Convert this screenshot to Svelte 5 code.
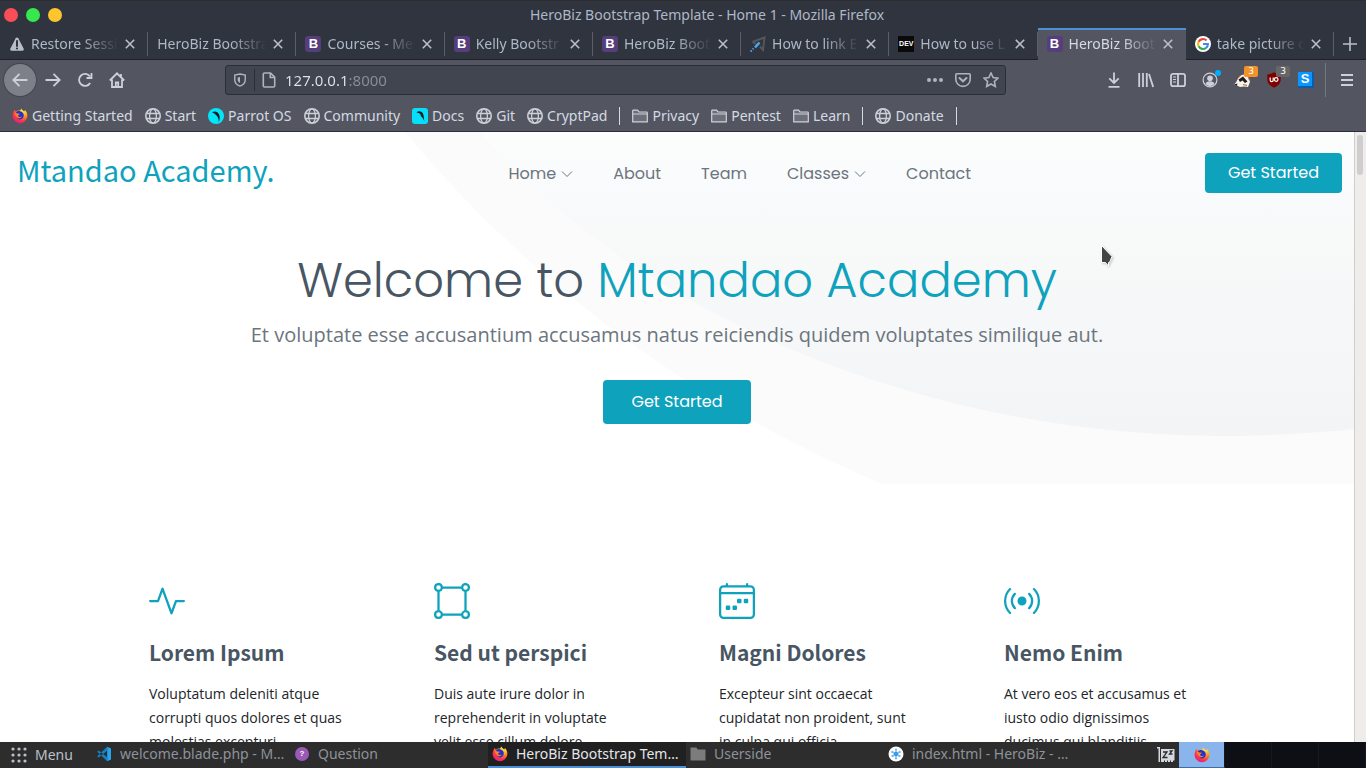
<script>
  const tabs = [
    { icon: 'warn', label: 'Restore Sessi' },
    { icon: '', label: 'HeroBiz Bootstra' },
    { icon: 'b', label: 'Courses - Me' },
    { icon: 'b', label: 'Kelly Bootstr' },
    { icon: 'b', label: 'HeroBiz Boot' },
    { icon: 'plane', label: 'How to link E' },
    { icon: 'dev', label: 'How to use L' },
    { icon: 'b', label: 'HeroBiz Boot', active: true },
    { icon: 'google', label: 'take picture o' }
  ];
  const bookmarks = [
    { icon: 'firefox', label: 'Getting Started' },
    { icon: 'globe', label: 'Start' },
    { icon: 'parrot', label: 'Parrot OS' },
    { icon: 'globe', label: 'Community' },
    { icon: 'docs', label: 'Docs' },
    { icon: 'globe', label: 'Git' },
    { icon: 'globe', label: 'CryptPad' },
    { sep: true },
    { icon: 'folder', label: 'Privacy' },
    { icon: 'folder', label: 'Pentest' },
    { icon: 'folder', label: 'Learn' },
    { sep: true },
    { icon: 'globe', label: 'Donate' },
    { sep: true }
  ];
  const links = [
    { label: 'Home', menu: true },
    { label: 'About' },
    { label: 'Team' },
    { label: 'Classes', menu: true },
    { label: 'Contact' }
  ];
  const features = [
    {
      title: 'Lorem Ipsum',
      text: 'Voluptatum deleniti atque corrupti quos dolores et quas molestias excepturi',
      paths: ['M6 2a.5.5 0 0 1 .47.33L10 12.036l1.53-4.208A.5.5 0 0 1 12 7.5h3.5a.5.5 0 0 1 0 1h-3.15l-1.88 5.17a.5.5 0 0 1-.94 0L6 3.964 4.47 8.171A.5.5 0 0 1 4 8.5H.5a.5.5 0 0 1 0-1h3.15l1.88-5.17A.5.5 0 0 1 6 2Z']
    },
    {
      title: 'Sed ut perspici',
      text: 'Duis aute irure dolor in reprehenderit in voluptate velit esse cillum dolore',
      paths: ['M2 1a1 1 0 1 0 0 2 1 1 0 0 0 0-2zM0 2a2 2 0 0 1 3.937-.5h8.126A2 2 0 1 1 14.5 3.937v8.126a2 2 0 1 1-2.437 2.437H3.937A2 2 0 1 1 1.5 12.063V3.937A2 2 0 0 1 0 2zm2.5 1.937v8.126c.703.18 1.256.734 1.437 1.437h8.126a2.004 2.004 0 0 1 1.437-1.437V3.937A2.004 2.004 0 0 1 12.063 2.5H3.937A2.004 2.004 0 0 1 2.5 3.937zM14 1a1 1 0 1 0 0 2 1 1 0 0 0 0-2zM2 13a1 1 0 1 0 0 2 1 1 0 0 0 0-2zm12 0a1 1 0 1 0 0 2 1 1 0 0 0 0-2z']
    },
    {
      title: 'Magni Dolores',
      text: 'Excepteur sint occaecat cupidatat non proident, sunt in culpa qui officia',
      paths: [
        'M3.5 0a.5.5 0 0 1 .5.5V1h8V.5a.5.5 0 0 1 1 0V1h1a2 2 0 0 1 2 2v11a2 2 0 0 1-2 2H2a2 2 0 0 1-2-2V3a2 2 0 0 1 2-2h1V.5a.5.5 0 0 1 .5-.5zM2 2a1 1 0 0 0-1 1v1h14V3a1 1 0 0 0-1-1H2zm13 3H1v9a1 1 0 0 0 1 1h12a1 1 0 0 0 1-1V5z',
        'M11 7.5a.5.5 0 0 1 .5-.5h1a.5.5 0 0 1 .5.5v1a.5.5 0 0 1-.5.5h-1a.5.5 0 0 1-.5-.5v-1zm-3 0a.5.5 0 0 1 .5-.5h1a.5.5 0 0 1 .5.5v1a.5.5 0 0 1-.5.5h-1a.5.5 0 0 1-.5-.5v-1zm-2 3a.5.5 0 0 1 .5-.5h1a.5.5 0 0 1 .5.5v1a.5.5 0 0 1-.5.5h-1a.5.5 0 0 1-.5-.5v-1zm-3 0a.5.5 0 0 1 .5-.5h1a.5.5 0 0 1 .5.5v1a.5.5 0 0 1-.5.5h-1a.5.5 0 0 1-.5-.5v-1z'
      ]
    },
    {
      title: 'Nemo Enim',
      text: 'At vero eos et accusamus et iusto odio dignissimos ducimus qui blanditiis',
      paths: ['M3.05 3.05a7 7 0 0 0 0 9.9.5.5 0 0 1-.707.707 8 8 0 0 1 0-11.314.5.5 0 0 1 .707.707zm2.122 2.122a4 4 0 0 0 0 5.656.5.5 0 1 1-.708.708 5 5 0 0 1 0-7.072.5.5 0 0 1 .708.708zm5.656-.708a.5.5 0 0 1 .708 0 5 5 0 0 1 0 7.072.5.5 0 1 1-.708-.708 4 4 0 0 0 0-5.656.5.5 0 0 1 0-.708zm2.122-2.12a.5.5 0 0 1 .707 0 8 8 0 0 1 0 11.313.5.5 0 0 1-.707-.707 7 7 0 0 0 0-9.9.5.5 0 0 1 0-.707zM10 8a2 2 0 1 1-4 0 2 2 0 0 1 4 0z']
    }
  ];
  const tasks = [
    { icon: 'code', label: 'welcome.blade.php - M…' },
    { icon: 'question', label: 'Question' },
    { icon: 'firefox', label: 'HeroBiz Bootstrap Tem…', active: true },
    { icon: 'dir', label: 'Userside' },
    { icon: 'atom', label: 'index.html - HeroBiz - …' }
  ];
  let address = $state('127.0.0.1:8000');
</script>

{#snippet icon(name)}
  {#if name === 'b'}
    <span class="fav-b">B</span>
  {:else if name === 'dev'}
    <span class="fav-dev">DEV</span>
  {:else if name === 'question'}
    <span class="fav-q">?</span>
  {:else if name}
    <svg class="ico" viewBox="0 0 16 16" width="16" height="16" aria-hidden="true">
      {#if name === 'warn'}
        <path d="M8 1.500c.6 0 1 .3 1.300.8l5.300 10.300c.6 1.200 0 2.200-1.200 2.200H2.600c-1.200 0-1.800-1-1.200-2.200L6.700 2.300C7 1.800 7.400 1.500 8 1.500z" fill="#b6bec9" />
        <path d="M8 5v5" stroke="#2f343f" stroke-width="2" stroke-linecap="round" /><circle cx="8" cy="12.500" r="1.100" fill="#2f343f" />
      {:else if name === 'plane'}
        <path d="M2.500 6 14.500 1.500 13 14 10 10.500M2.500 6 6 8" fill="none" stroke="#54565a" stroke-width="2" />
        <path d="m9.500 6.500-4.500 5" stroke="#4aa8f0" stroke-width="2.600" /><path d="m3.500 12.500-.8.8" stroke="#4aa8f0" stroke-width="2" /><circle cx="1.200" cy="15" r="1" fill="#4aa8f0" />
      {:else if name === 'google'}
        <circle cx="8" cy="8" r="8" fill="#fff" />
        <g fill="none" stroke-width="2.100">
          <path d="M11.500 4.500A5 5 0 0 0 3.600 5.700" stroke="#ea4335" />
          <path d="M3.600 5.700a5 5 0 0 0 0 4.600" stroke="#fbbc05" />
          <path d="M3.600 10.300a5 5 0 0 0 7.500 1.600" stroke="#34a853" />
          <path d="M8 8h4.900a5 5 0 0 1-1.800 3.900" stroke="#4285f4" />
        </g>
      {:else if name === 'globe'}
        <g fill="none" stroke="#cdd0d8" stroke-width="1.300"><circle cx="8" cy="8" r="7.200" stroke-width="1.600" /><ellipse cx="8" cy="8" rx="3.400" ry="7.200" /><path d="M1.500 5.500h13M1.500 10.500h13" /></g>
      {:else if name === 'folder'}
        <path d="M.7 13.800V3q0-.8.8-.8h4l1.500 1.800h7.500q.8 0 .8.800v9z" fill="#6c6f79" stroke="#cfd2d8" stroke-width="1.200" /><path d="M1 6h14" stroke="#cfd2d8" />
      {:else if name === 'parrot'}
        <circle cx="8" cy="8" r="8" fill="#05e5fa" /><path d="M4 4.500c2.500-2 5.500-1 6.800 1.500 1.200 2.300 1.200 4.700 0 8 0-3-.7-5-2.300-6.500L7 6C6 5.300 5 4.800 4 4.500z" fill="#101820" />
      {:else if name === 'docs'}
        <rect width="16" height="16" rx="3" fill="#05dffa" /><path d="M4.500 4.500c2-2 5-1.500 6.300.8 1 2 1 4.500 1.500 8-1-3-2-4-3.500-5.300L8.500 6C7 5.500 6 4.500 4.500 4.500z" fill="#101820" />
      {:else if name === 'firefox'}
        <defs>
          <radialGradient id="ff-fire" cx=".75" cy=".12" r="1"><stop offset="0" stop-color="#fff44f" /><stop offset=".4" stop-color="#ff9a1c" /><stop offset=".72" stop-color="#ff3647" /><stop offset="1" stop-color="#e31587" /></radialGradient>
        </defs>
        <path d="M1.300 4.200 2.600 1.800l1 1.800C5.300 2.500 6.600 2.400 8 2.600L9.300.4c.8 1.700 2 2.200 3 3.100l.7-1.500c1.800 1.800 2.600 4 2.300 6.700A7.400 7.400 0 0 1 .6 8.700c-.1-1.700.1-3.100.7-4.500z" fill="url(#ff-fire)" />
        <path d="M4 4.200c1.500-1.400 3.300-1.200 4-.9l1.900.8c1.900 1.400 2.200 3.200 1.600 4.900-.8 2-2.800 2.900-4.700 2.200C5 10.500 4.300 9 4.700 7.700z" fill="#2531cf" />
        <path d="M2.600 5.300C4 4.600 5 5 5.600 5.600l2.200.2c0 1-1.700 1.300-1.800 2 .4 1.300 2.300 1.700 3.800.8-.8 2.100-4.600 2.400-5.700-.7z" fill="#ff831f" />
      {:else if name === 'code'}
        <path d="M11.200.8 15 2.500v11l-3.800 1.700z" fill="#26a6ef" />
        <path d="m11.200.8.3 3.700-8.800 7.100-1.500-1.400zM11.200 15.200l.3-3.700-8.800-7.100-1.500 1.400z" fill="#1480c8" />
      {:else if name === 'dir'}
        <path d="M.5 14.500v-13h5.800l1.500 2h7.700v11z" fill="#7c7c7c" />
      {:else if name === 'atom'}
        <circle cx="8" cy="8" r="7.500" fill="#fff" /><path d="M8 3v10M3.800 5.500l8.400 5M12.200 5.500l-8.400 5" stroke="#8cc4f0" stroke-width="1.500" /><path d="m8 5.500 2.200 1.200v2.600L8 10.500 5.800 9.300V6.700z" fill="#3b9be8" /><g fill="#6cb4ee"><circle cx="8" cy="3.500" r="1" /><circle cx="4.200" cy="6" r="1" /><circle cx="11.800" cy="6" r="1" /><circle cx="4.500" cy="10" r="1" /><circle cx="11.500" cy="10" r="1" /><circle cx="8" cy="12.500" r="1" /></g>
      {/if}
    </svg>
  {/if}
{/snippet}

<div class="desktop">
  <header class="chrome">
    <div class="titlebar">
      <div class="lights"><button class="red" aria-label="Close window"></button><button class="green" aria-label="Maximise"></button><button class="yellow" aria-label="Minimise"></button></div>
      <span>HeroBiz Bootstrap Template - Home 1 - Mozilla Firefox</span>
    </div>
    <div class="tabs">
      {#each tabs as t}
        <div class="tab" class:active={t.active}>
          {@render icon(t.icon)}
          <span class="tab-label">{t.label}</span>
          <button class="close" aria-label="Close tab"><svg viewBox="0 0 10 10" width="10" height="10"><path d="m.8.8 8.400 8.400M9.200.8.8 9.200" stroke="currentColor" stroke-width="1.600" /></svg></button>
        </div>
      {/each}
      <button class="newtab" aria-label="New tab"><svg viewBox="0 0 14 14" width="14" height="14"><path d="M7 0v14M0 7h14" stroke="currentColor" stroke-width="1.600" /></svg></button>
    </div>
    <div class="toolbar">
      <button class="tool back" aria-label="Back"><svg viewBox="0 0 16 16" width="16" height="16"><path d="M15.500 8H1.500M7.500 1.800 1.300 8l6.200 6.200" /></svg></button>
      <button class="tool" aria-label="Forward"><svg viewBox="0 0 16 16" width="16" height="16"><path d="M.5 8h14M8.500 1.800 14.700 8l-6.200 6.200" /></svg></button>
      <button class="tool" aria-label="Reload"><svg viewBox="0 0 16 16" width="16" height="16"><path d="M13.200 11A6 6 0 1 1 13 4.500M14.500 1v5H9.500" /></svg></button>
      <button class="tool" aria-label="Home"><svg viewBox="0 0 16 16" width="16" height="16"><path d="M.8 8.500 8 1.300l7.200 7.200M3 7.500V15h10V7.500M6.800 15v-4.500h2.400V15M12 2v3" /></svg></button>
      <div class="urlbar">
        <svg class="line" viewBox="0 0 16 16" width="14" height="14"><path d="M8 1.200 14 2.500v5.200c0 3.500-2.500 6-6 7.300-3.500-1.300-6-3.800-6-7.300V2.500z" /><path d="M8 4.500v7c-1.800-.9-2.700-2.300-2.700-4V5z" fill="currentColor" stroke="none" /></svg>
        <span class="url-sep"></span>
        <svg class="line" viewBox="0 0 16 16" width="16" height="16"><path d="M3.500 1h6l4.200 4.200v8.600q0 1.200-1.200 1.200h-9q-1.200 0-1.200-1.200V2.200Q2.300 1 3.500 1zM9.300 1v4.500h4.400" /></svg>
        <input type="text" aria-label="Address" bind:value={address} />
        <svg viewBox="0 0 16 16" width="16" height="16" fill="currentColor"><circle cx="2" cy="8" r="2" /><circle cx="8" cy="8" r="2" /><circle cx="14" cy="8" r="2" /></svg>
        <svg class="line" viewBox="0 0 16 16" width="16" height="16"><path d="M1.800 1.800h12.400q1 0 1 1v4.400a7.200 7.200 0 0 1-14.400 0V2.800q0-1 1-1z" /><path d="m4.500 6 3.500 3.300L11.500 6" stroke-width="2" stroke-linecap="round" /></svg>
        <svg class="line" viewBox="0 0 16 16" width="16" height="16"><path d="m8 1 2.100 4.500 4.900.6-3.600 3.400.9 4.900L8 12l-4.300 2.400.9-4.900L1 6.100l4.900-.6z" /></svg>
      </div>
      <button class="tool" aria-label="Downloads"><svg viewBox="0 0 16 16" width="16" height="16"><path d="M8 .5v10M3.300 6.300 8 11l4.700-4.700M2.500 14.800h11" /></svg></button>
      <button class="tool" aria-label="Library"><svg viewBox="0 0 16 16" width="16" height="16"><path d="M1.200 1v14M5 1v14M8.800 1v14M11 2l4.200 13" /></svg></button>
      <button class="tool" aria-label="Sidebar"><svg viewBox="0 0 16 16" width="16" height="16"><rect x="1" y="1.800" width="14" height="12.400" rx="2" /><path d="M8 2v12" /><path d="M3 5h3M3 7.500h3M3 10h3" stroke-width="1" /></svg></button>
      <button class="tool" aria-label="Account">
        <svg viewBox="0 0 16 16" width="16" height="16"><circle cx="8" cy="8" r="6.900" stroke-width="1.200" /><circle cx="8" cy="6.300" r="2.800" fill="currentColor" stroke="none" /><path d="M3.300 12c1-2 2.500-2.700 4.700-2.700s3.700.7 4.700 2.700a6.200 6.200 0 0 1-9.400 0z" fill="currentColor" stroke="none" /></svg>
        <i class="dot"></i>
      </button>
      <button class="tool" aria-label="Privacy Badger">
        <svg viewBox="0 0 16 16" width="16" height="16" stroke="none"><path d="M0 12.500C2 11 3 8.500 4 6.500 5.500 4 8 2.500 10.500 2.500l4 2.500 1.500 5-2 5-4-.5-4 .5-3-1.500z" fill="#f7f2ea" /><path d="M0 12.500 3.500 11.500 2.900 13.800zM4.500 7.500 9 4.500l4.500 5-2.500 1.500L8.500 8.500 6 10z" fill="#221d1d" /><path d="m10.500 3 4 2 .8 3M4 6l2-2.200M9 12.500l4 1" fill="none" stroke="#ba6a35" stroke-width="1.100" /></svg>
        <b class="badge orange">3</b>
      </button>
      <button class="tool" aria-label="uBlock Origin">
        <svg viewBox="0 0 16 16" width="16" height="16" stroke="none"><path d="M8 .3c2 1.300 4 1.900 6.700 2.100v5c0 4-3 6.500-6.700 8.300C4.300 13.900 1.300 11.400 1.300 7.400v-5C4 2.200 6 1.600 8 .3z" fill="#800000" /><path d="M4.200 5.500v2.800q0 1.300 1.500 1.300t1.500-1.300V5.500" fill="none" stroke="#fff" stroke-width="1.200" /><circle cx="10.200" cy="7.500" r="1.800" fill="none" stroke="#fff" stroke-width="1.200" /></svg>
        <b class="badge gray">3</b>
      </button>
      <button class="tool" aria-label="Stylus"><span class="fav-s">S</span></button>
      <span class="bar-sep"></span>
      <button class="tool" aria-label="Open menu"><svg viewBox="0 0 16 16" width="16" height="16"><path d="M2 3h12M2 8h12M2 13h12" /></svg></button>
    </div>
    <nav class="bookmarks" aria-label="Bookmarks">
      {#each bookmarks as b}
        {#if b.sep}<i class="bm-sep"></i>{:else}<a href="#top">{@render icon(b.icon)}{b.label}</a>{/if}
      {/each}
    </nav>
  </header>

  <div class="viewport">
    <main class="site" id="top">
      <svg class="swoosh" viewBox="0 0 1354 352" preserveAspectRatio="none" aria-hidden="true">
        <defs>
          <linearGradient id="wash" x1="0" y1="0" x2="0" y2="1"><stop offset="0" stop-color="#fcfdfd" /><stop offset=".2" stop-color="#f9fafb" /><stop offset=".35" stop-color="#f8f9f9" /><stop offset=".65" stop-color="#f5f7f8" /><stop offset="1" stop-color="#f3f4f6" /></linearGradient>
        </defs>
        <path d="M405 0C525 145 690 272 882 352H1354V0z" fill="#fbfbfb" />
        <path d="M480 0C640 186 930 304 1223 304 1270 304 1315 301 1354 297V0z" fill="url(#wash)" />
      </svg>
      <div class="site-head">
        <a class="logo" href="#top">Mtandao Academy.</a>
        <nav class="menu" aria-label="Main">
          {#each links as l}
            <a href="#top">{l.label}{#if l.menu}<svg viewBox="0 0 12 12" width="12" height="12"><path d="m1 3.500 5 5 5-5" fill="none" stroke="currentColor" /></svg>{/if}</a>
          {/each}
        </nav>
        <a class="btn" href="#features">Get Started</a>
      </div>
      <section class="hero">
        <h1>Welcome to <span>Mtandao Academy</span></h1>
        <p>Et voluptate esse accusantium accusamus natus reiciendis quidem voluptates similique aut.</p>
        <a class="btn big" href="#features">Get Started</a>
      </section>
      <section class="features" id="features">
        {#each features as f}
          <article>
            <svg viewBox="0 0 16 16" width="36" height="36" fill="currentColor" aria-hidden="true">{#each f.paths as d}<path {d} />{/each}</svg>
            <h2>{f.title}</h2>
            <p>{f.text}</p>
          </article>
        {/each}
      </section>
      <svg class="pointer" viewBox="0 0 14 24" width="14" height="24" aria-hidden="true"><path d="M1.500 1.500v17h4L8.500 22v-3.500h1l2.500-6z" fill="#444" stroke="#fff" /></svg>
    </main>
    <div class="scrollbar"><i></i></div>
  </div>

  <footer class="taskbar">
    <button class="start"><svg viewBox="0 0 16 16" width="16" height="16" fill="#b9c0c9">{#each [2, 8, 14] as x}{#each [2, 8, 14] as y}<circle cx={x} cy={y} r="1.600" />{/each}{/each}</svg>Menu</button>
    <div class="tasks">
      {#each tasks as t}
        <button class:active={t.active}>{@render icon(t.icon)}<span>{t.label}</span></button>
      {/each}
    </div>
    <svg class="tray" viewBox="0 0 18 18" width="18" height="18" aria-label="Memory"><path d="M0 1h3v15H1.500V2.500H0zM4 3h13.500v11.500H16V16h-2v-1.500h-1V16h-2v-1.500h-1V16H8v-1.500H7V16H4z" fill="#d5d9df" /><path d="M6 6h4l-4 5.500h4.500M12.500 5H15l-2.500 3h3" fill="none" stroke="#2b2b2b" stroke-width="1.300" /></svg>
    <div class="spaces"><button class="on" aria-label="Workspace 1">{@render icon('firefox')}</button><button aria-label="Workspace 2"></button><button aria-label="Workspace 3"></button><button aria-label="Workspace 4"></button></div>
  </footer>
</div>

<style>
  :global(body) { margin: 0; }
  .desktop { display: flex; flex-direction: column; height: 100vh; overflow: hidden; font: 15px/20px "Noto Sans", sans-serif; }
  button { border: 0; padding: 0; background: none; color: inherit; font: inherit; display: flex; align-items: center; justify-content: center; }
  a { color: inherit; text-decoration: none; }
  svg { display: block; flex: none; }

  .chrome { flex: none; background: #535661; color: #d3dae3; font-size: 14px; border-bottom: 1px solid #2b2e39; }
  .titlebar { display: grid; grid-template-columns: auto 1fr; align-items: center; height: 28px; padding: 0 4px; background: #2f343f; color: #afb8c5; box-sizing: border-box; border-top: 1px solid #2d2d2d; }
  .titlebar span { text-align: center; padding-right: 10px; }
  .lights { display: flex; gap: 8px; }
  .lights button { width: 14px; height: 14px; border-radius: 50%; }
  .red { background: #f94e58; } .green { background: #37e84c; } .yellow { background: #fdc62f; }
  .tabs { display: flex; height: 32px; background: #2f343f; color: #afb8c5; }
  .tab { flex: 1 1 0; min-width: 0; display: flex; align-items: center; gap: 6px; padding: 0 13px 0 9px; border-bottom: 1px solid #1f222c; box-sizing: border-box; background: linear-gradient(#5a5e67, #5a5e67) right 4px / 1px 24px no-repeat; }
  .tab.active { background: #535661; border-top: 2px solid #4a90d9; border-bottom-color: #535661; color: #d3dae3; padding-bottom: 1px; }
  .tab-label { flex: 1; min-width: 0; overflow: hidden; white-space: nowrap; mask-image: linear-gradient(to left, transparent, #000 36px); }
  .close { color: #b9c0ca; width: 10px; }
  .newtab { width: 32px; color: #b9c0ca; border-bottom: 1px solid #1f222c; }
  .fav-b { flex: none; width: 16px; height: 16px; border-radius: 3px; background: #563d7c; color: #fff; font: bold 13px/16px "Liberation Sans", sans-serif; text-align: center; }
  .fav-dev { flex: none; width: 16px; height: 16px; background: #0a0a0a; color: #fff; font: bold 7px/16px "Liberation Sans", sans-serif; text-align: center; }
  .fav-q { flex: none; width: 14px; height: 14px; margin: 0 1px; border-radius: 50%; background: #9b59b6; color: #fff; font: bold 8px/14px "Liberation Sans", sans-serif; text-align: center; }
  .fav-s { width: 14px; height: 14px; background: #0b95ff; color: #fff; font: bold 13px/14px "Liberation Sans", sans-serif; text-align: center; border-right: 2px solid #0a5da8; border-bottom: 2px solid #0a5da8; }

  .toolbar { display: flex; align-items: center; height: 40px; padding: 0 3px 0 4px; color: #cdd0d8; }
  .tool { position: relative; flex: none; width: 32px; height: 32px; }
  .tool > svg { fill: none; stroke: currentColor; stroke-width: 1.8; }
  .tool > svg[stroke="none"] { stroke: none; }
  .back { background: #7d8088; border-radius: 50%; box-shadow: 0 0 0 1px #43464f; margin-right: 1px; }
  .urlbar { flex: 1; display: flex; align-items: center; gap: 12px; height: 30px; margin: 0 92px; padding: 0 6px 0 7px; box-sizing: border-box; background: #404550; border: 1px solid #2b2e39; border-radius: 3px; color: #b0b4bb; }
  .line { fill: none; stroke: currentColor; stroke-width: 1.6; }
  .url-sep { width: 1px; height: 22px; background: #2b2e39; margin: 0 -6px 0 -5px; }
  .urlbar input { flex: 1; min-width: 0; border: 0; outline: 0; padding: 0; margin-left: -4px; font: 15px/22px "Noto Sans", sans-serif; color: transparent; background: linear-gradient(to right, #e0e4ea 64px, #898e98 64px); -webkit-background-clip: text; background-clip: text; }
  .dot { position: absolute; right: 5px; top: 6px; width: 6px; height: 6px; border-radius: 50%; background: #00adff; }
  .badge { position: absolute; right: 0; top: 2px; width: 14px; height: 11px; border-radius: 2px; color: #fff; font: 9px/11px "DejaVu Sans", sans-serif; text-align: center; }
  .orange { background: #f0932b; } .gray { background: #666; }
  .bar-sep { width: 1px; height: 34px; background: #747780; margin: 0 5px 0 3px; }
  .bookmarks { display: flex; align-items: center; gap: 12px; height: 31px; padding: 0 12px; }
  .bookmarks a { display: flex; align-items: center; gap: 4px; white-space: nowrap; }
  .bm-sep { width: 1px; height: 18px; background: #d8dbe0; }

  .viewport { flex: 1; min-height: 0; display: flex; overflow: hidden; }
  .site { position: relative; flex: 1; min-width: 0; overflow: hidden; background: #fff; color: #212529; isolation: isolate; }
  .swoosh { position: absolute; z-index: -1; top: 0; left: 0; width: 100%; height: 352px; }
  .scrollbar { flex: none; width: 12px; background: #efedec; border-left: 1px solid #d2cdc9; padding: 3px 2px; box-sizing: border-box; }
  .scrollbar i { display: block; width: 6px; height: 40px; border-radius: 3px; background: #cfcdcd; }
  .site-head { display: flex; align-items: center; justify-content: space-between; height: 82px; padding: 0 12px 0 17px; }
  .logo { font: 29px/40px "Noto Sans CJK SC", sans-serif; color: #0ea2bd; padding-bottom: 8px; }
  .menu { display: flex; gap: 40px; padding-top: 2px; }
  .menu a, .btn, h1 { font-family: Poppins, Inter, sans-serif; }
  .menu a { display: flex; align-items: center; gap: 5px; font-size: 16px; line-height: 24px; color: #6c757d; }
  .btn { box-sizing: border-box; display: block; padding: 8px 23px; border-radius: 4px; background: #0ea2bd; color: #fff; font-size: 16px; line-height: 24px; }
  .big { padding: 10px 28px; }
  .hero { display: flex; flex-direction: column; align-items: center; height: 270px; padding-top: 38px; box-sizing: border-box; text-align: center; }
  h1 { margin: 0; font-size: 48px; line-height: 58px; font-weight: 300; color: #485664; }
  h1 span { color: #0ea2bd; }
  .hero p { margin: 9px 0 29px; font: 20px/32px "Open Sans", sans-serif; color: #6c757d; }
  .features { display: grid; grid-template-columns: repeat(4, 1fr); max-width: 1140px; margin: 0 auto; padding-top: 99px; }
  article { padding: 0 42px; color: #0ea2bd; }
  h2 { margin: 16px 0 13px; font: 600 21px/34px "Noto Sans CJK SC", sans-serif; color: #485664; }
  article p { margin: 0; font: 14px/24px "Open Sans", sans-serif; color: #212529; }
  .pointer { position: absolute; left: 1100px; top: 112px; filter: drop-shadow(1px 1px 1px #0003); }

  .taskbar { flex: none; display: flex; align-items: center; height: 26px; background: #2d2d2d; color: #b9c0c9; font-size: 14px; }
  .start { width: 92px; gap: 8px; justify-content: flex-start; padding-left: 11px; box-sizing: border-box; }
  .tasks { flex: 1; min-width: 0; display: flex; align-self: stretch; }
  .tasks button { flex: 0 1 198px; min-width: 0; gap: 8px; justify-content: flex-start; padding: 0 4px; box-sizing: border-box; color: #8d929a; border-bottom: 2px solid transparent; white-space: nowrap; }
  .tasks span:last-child { overflow: hidden; }
  .tasks .active { background: #202020; color: #e3e6ea; border-color: #4a90d9; }
  .tray { margin-right: 4px; }
  .spaces { display: flex; align-self: stretch; background: #0e0f14; }
  .spaces button { width: 47px; border-right: 1px solid #17181d; box-sizing: border-box; }
  .spaces .on { width: 46px; background: #8ab4ec; border-bottom: 1px solid #3a6ea8; }
</style>
